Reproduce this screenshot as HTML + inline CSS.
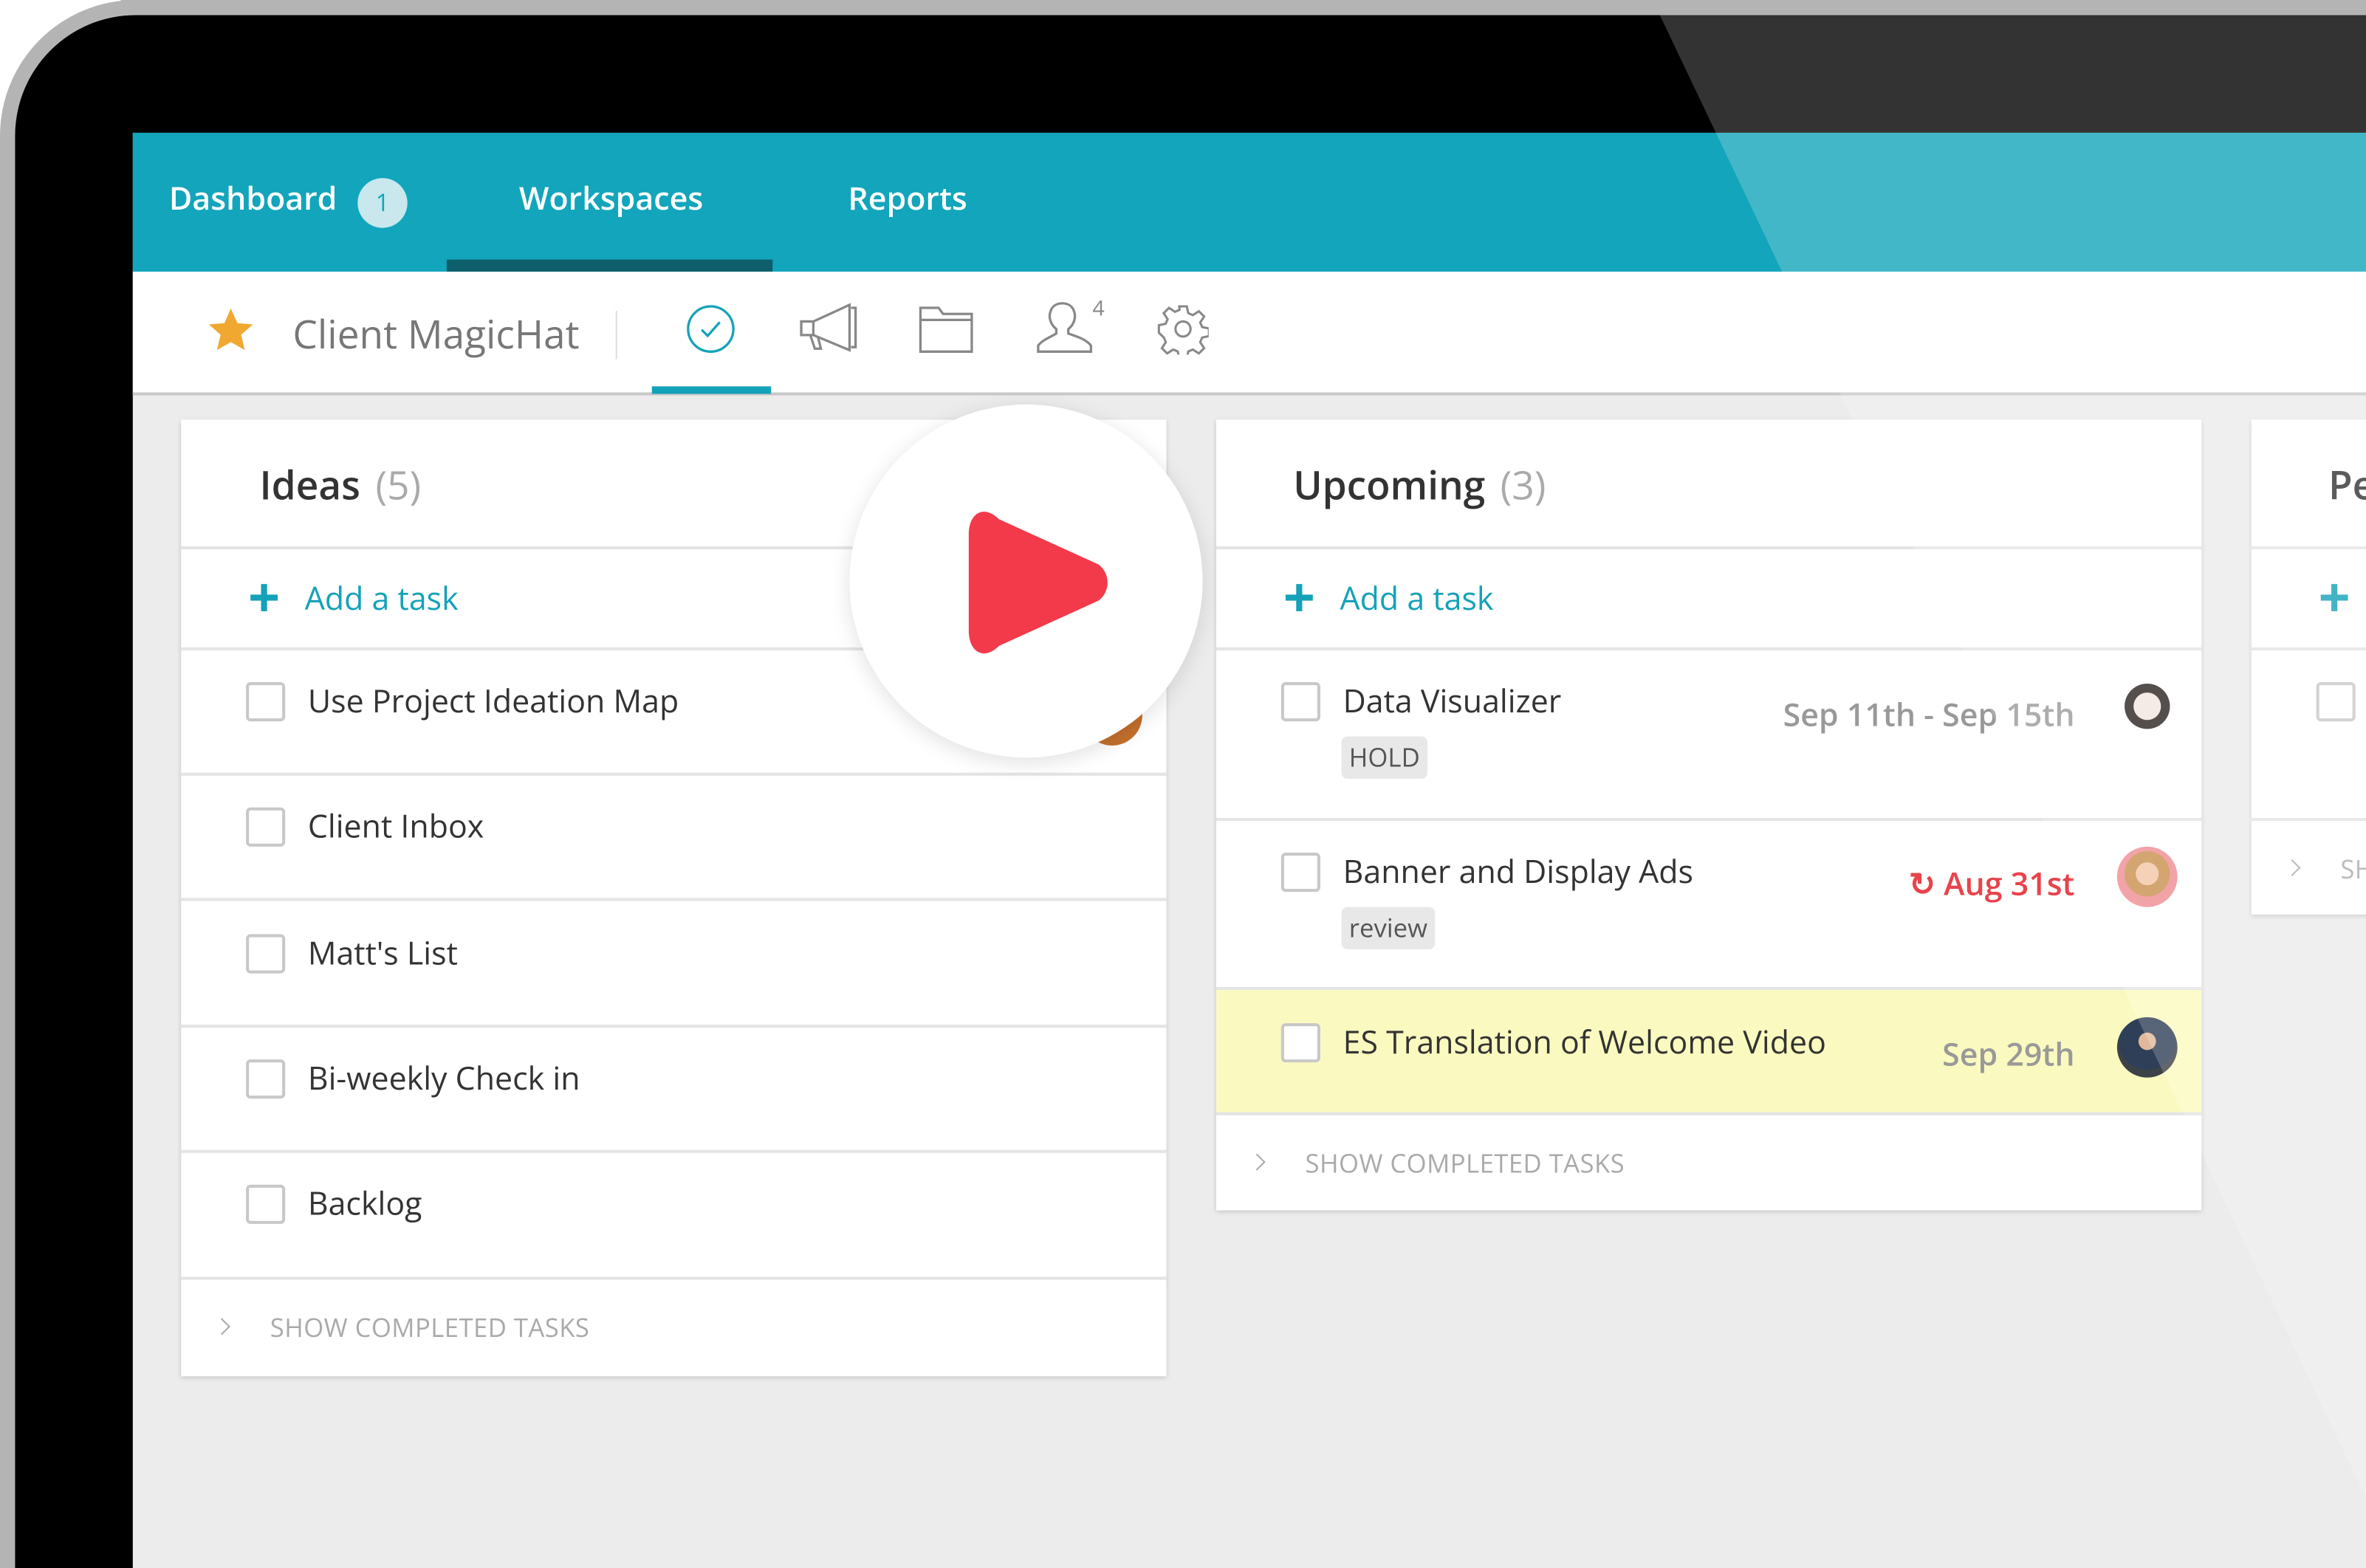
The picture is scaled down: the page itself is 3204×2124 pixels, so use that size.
<!DOCTYPE html>
<html><head><meta charset="utf-8"><style>
html,body{margin:0;padding:0;width:3204px;height:2124px;overflow:hidden;background:#fff}
#s{position:absolute;left:0;top:0;width:1568px;height:1039px;transform-origin:0 0;transform:scale(2.0434,2.0443);font-family:"Open Sans","Liberation Sans",sans-serif;overflow:hidden}
.a{position:absolute}
.col{position:absolute;background:#fff;box-shadow:0 1px 3px rgba(0,0,0,.18)}
.hd{font-size:26px;color:#333;position:absolute;top:25px;font-weight:600}
.hd span{color:#aaa;font-weight:400;margin-left:10px}
.line{position:absolute;left:0;right:0;height:2px;background:#e4e4e4}
.add{position:absolute;font-size:21px;color:#14a2b8}
.plus{position:absolute;width:18px;height:18px}
.plus:before{content:"";position:absolute;left:7px;top:0;width:4px;height:18px;background:#14a2b8}
.plus:after{content:"";position:absolute;top:7px;left:0;height:4px;width:18px;background:#14a2b8}
.cb{position:absolute;width:22px;height:22px;border:2px solid #c8c8c8;border-radius:3px;background:#fff}
.tx{position:absolute;font-size:21px;color:#333;white-space:nowrap}
.sc{position:absolute;font-size:17px;color:#aaa;letter-spacing:.2px}
.chev{position:absolute;width:7px;height:7px;border-right:1.5px solid #aaa;border-top:1.5px solid #aaa;transform:rotate(45deg)}
.dt{position:absolute;font-size:21px;color:#999;font-weight:600;white-space:nowrap;text-align:right}
.tag{position:absolute;background:#e8e8e8;border-radius:4px;font-size:17px;color:#555;padding:2px 5px;line-height:24px}
.av{position:absolute;width:40px;height:40px;border-radius:50%}
.nav{position:absolute;top:118px;font-size:21px;color:#fff;font-weight:600}
</style></head><body><div id="s">
<div class="a" style="left:0;top:0;width:1700px;height:1200px;background:#b4b4b4;border-top-left-radius:90px"></div>
<div class="a" style="left:10px;top:10px;width:1600px;height:1100px;background:#000;border-top-left-radius:80px"></div>
<div class="a" style="left:88px;top:88px;width:1500px;height:960px;background:#ececec"></div>
<div class="a" style="left:88px;top:88px;width:1500px;height:92px;background:#12a5bb"></div>
<div class="nav" style="left:112px">Dashboard</div>
<div class="a" style="left:237px;top:118px;width:33px;height:33px;border-radius:50%;background:#c8e8ee;color:#12a5bb;font-size:16px;text-align:center;line-height:33px">1</div>
<div class="nav" style="left:344px">Workspaces</div>
<div class="a" style="left:296px;top:172px;width:216px;height:8px;background:#0e5e6b"></div>
<div class="nav" style="left:562px">Reports</div>
<div class="a" style="left:88px;top:180px;width:1500px;height:80px;background:#fff;border-bottom:2px solid #c9c9c9"></div>
<svg class="a" style="left:136px;top:203px" width="34" height="32" viewBox="0 0 24 23"><path d="M12 1l3.1 7 7.4.6-5.6 4.9 1.7 7.3L12 17l-6.6 3.8 1.7-7.3L1.5 8.6 8.9 8z" fill="#f0a830"/></svg>
<div class="a" style="left:194px;top:203px;font-size:26px;color:#777">Client MagicHat</div>
<div class="a" style="left:408px;top:206px;width:1px;height:32px;background:#ddd"></div>
<svg class="a" style="left:454px;top:201px" width="34" height="34" viewBox="0 0 34 34"><circle cx="17" cy="17" r="15" fill="none" stroke="#14a2b8" stroke-width="1.6"/><path d="M11 17.5l4 4 8-9" fill="none" stroke="#14a2b8" stroke-width="1.6"/></svg>
<div class="a" style="left:432px;top:256px;width:79px;height:5px;background:#14a2b8"></div>
<svg class="a" style="left:528px;top:200px" width="42" height="36" viewBox="0 0 42 36" fill="none" stroke="#888" stroke-width="1.6"><path d="M3 13h8l24-11v30L11 22H3z"/><path d="M11 13v9M9 22l3 9h4l-2-8"/><path d="M36 4h3v26h-3"/></svg>
<svg class="a" style="left:608px;top:201px" width="38" height="34" viewBox="0 0 38 34" fill="none" stroke="#888" stroke-width="1.6"><path d="M2 3h12l3 4h19v25H2z"/><path d="M2 11h34"/></svg>
<svg class="a" style="left:686px;top:200px" width="40" height="36" viewBox="0 0 40 36" fill="none" stroke="#888" stroke-width="1.6"><path d="M14 18c-4-3-5-8-4-11 1-4 4-6 8-6s7 2 8 6c1 3 0 8-4 11v3c6 2 12 4 15 8v4H2v-4c3-4 9-6 12-8z"/></svg>
<div class="a" style="left:724px;top:195px;font-size:14px;color:#888">4</div>
<svg class="a" style="left:767px;top:201px" width="34" height="34" viewBox="0 0 34 34" fill="none" stroke="#888" stroke-width="1.5"><path d="M14.5 2h5l1 4.5 3 1.3 4-2.6 3.5 3.5-2.6 4 1.3 3 4.5 1v5l-4.5 1-1.3 3 2.6 4-3.5 3.5-4-2.6-3 1.3-1 4.5h-5l-1-4.5-3-1.3-4 2.6-3.5-3.5 2.6-4-1.3-3L1 19.5v-5l4.5-1 1.3-3-2.6-4 3.5-3.5 4 2.6 3-1.3z"/><circle cx="17" cy="17" r="5"/></svg>

<div class="col" style="left:120px;top:278px;width:653px;height:634px">
<div class="hd" style="left:52px">Ideas<span>(5)</span></div>
<div class="line" style="top:84px"></div>
<div class="plus" style="left:46px;top:109px"></div><div class="add" style="left:82px;top:105px">Add a task</div>
<div class="line" style="top:151px"></div>
<div class="cb" style="left:43px;top:174px"></div><div class="tx" style="left:84px;top:173px">Use Project Ideation Map</div>
<div class="av" style="left:597px;top:176px;background:#c4702c"></div>
<div class="line" style="top:234px"></div>
<div class="cb" style="left:43px;top:257px"></div><div class="tx" style="left:84px;top:256px">Client Inbox</div>
<div class="line" style="top:317px"></div>
<div class="cb" style="left:43px;top:341px"></div><div class="tx" style="left:84px;top:340px">Matt's List</div>
<div class="line" style="top:401px"></div>
<div class="cb" style="left:43px;top:424px"></div><div class="tx" style="left:84px;top:423px">Bi-weekly Check in</div>
<div class="line" style="top:484px"></div>
<div class="cb" style="left:43px;top:507px"></div><div class="tx" style="left:84px;top:506px">Backlog</div>
<div class="line" style="top:568px"></div>
<div class="chev" style="left:23px;top:597px"></div><div class="sc" style="left:59px;top:590px">SHOW COMPLETED TASKS</div>
</div>

<div class="col" style="left:806px;top:278px;width:653px;height:524px">
<div class="hd" style="left:51px">Upcoming<span>(3)</span></div>
<div class="line" style="top:84px"></div>
<div class="plus" style="left:46px;top:109px"></div><div class="add" style="left:82px;top:105px">Add a task</div>
<div class="line" style="top:151px"></div>
<div class="cb" style="left:43px;top:174px"></div><div class="tx" style="left:84px;top:173px">Data Visualizer</div>
<div class="tag" style="left:83px;top:210px">HOLD</div>
<div class="dt" style="right:84px;top:182px">Sep 11th - Sep 15th</div>
<div class="av" style="left:597px;top:172px;background:radial-gradient(circle at 50% 45%,#f3e6e0 0 30%,#2a2220 31% 50%,#fff 51%)"></div>
<div class="line" style="top:264px"></div>
<div class="cb" style="left:43px;top:287px"></div><div class="tx" style="left:84px;top:286px">Banner and Display Ads</div>
<div class="tag" style="left:83px;top:323px">review</div>
<div class="dt" style="right:84px;top:294px;color:#e8434b">&#x21bb; Aug 31st</div>
<div class="av" style="left:597px;top:283px;background:radial-gradient(circle at 50% 45%,#f2c6a6 0 25%,#c98f4e 26% 50%,#ef8c92 51%)"></div>
<div class="line" style="top:376px"></div>
<div class="a" style="left:0;top:378px;width:653px;height:82px;background:#fafac0"></div>
<div class="cb" style="left:43px;top:400px"></div><div class="tx" style="left:84px;top:399px">ES Translation of Welcome Video</div>
<div class="dt" style="right:84px;top:407px">Sep 29th</div>
<div class="av" style="left:597px;top:396px;background:radial-gradient(circle at 50% 40%,#e2b89a 0 18%,#2f3f58 19% 60%,#3c4246 61%)"></div>
<div class="line" style="top:459px"></div>
<div class="chev" style="left:23px;top:488px"></div><div class="sc" style="left:59px;top:481px">SHOW COMPLETED TASKS</div>
</div>

<div class="col" style="left:1492px;top:278px;width:120px;height:328px">
<div class="hd" style="left:51px">Pe</div>
<div class="line" style="top:84px"></div>
<div class="plus" style="left:46px;top:109px"></div>
<div class="line" style="top:151px"></div>
<div class="cb" style="left:43px;top:174px"></div>
<div class="line" style="top:264px"></div>
<div class="chev" style="left:23px;top:293px"></div><div class="sc" style="left:59px;top:286px">SH</div>
</div>

<div class="a" style="left:563px;top:268px;width:234px;height:234px;border-radius:50%;background:#fff;box-shadow:0 3px 14px rgba(0,0,0,.12)"></div>
<svg class="a" style="left:640px;top:336px" width="96" height="100" viewBox="0 0 96 100"><path d="M2 18C2 4 12 -2 22 8L88 38c8 6 8 18 0 24L22 92C12 102 2 96 2 82z" fill="#f23a4b"/></svg>

<svg class="a" style="left:0;top:0" width="1568" height="1039"><polygon points="1100,10 1568,10 1568,1039 1590,1039" fill="#fff" opacity="0.2"/></svg>
<div class="a" style="left:80px;top:0;width:1488px;height:10px;background:#b4b4b4"></div>
</div></body></html>
